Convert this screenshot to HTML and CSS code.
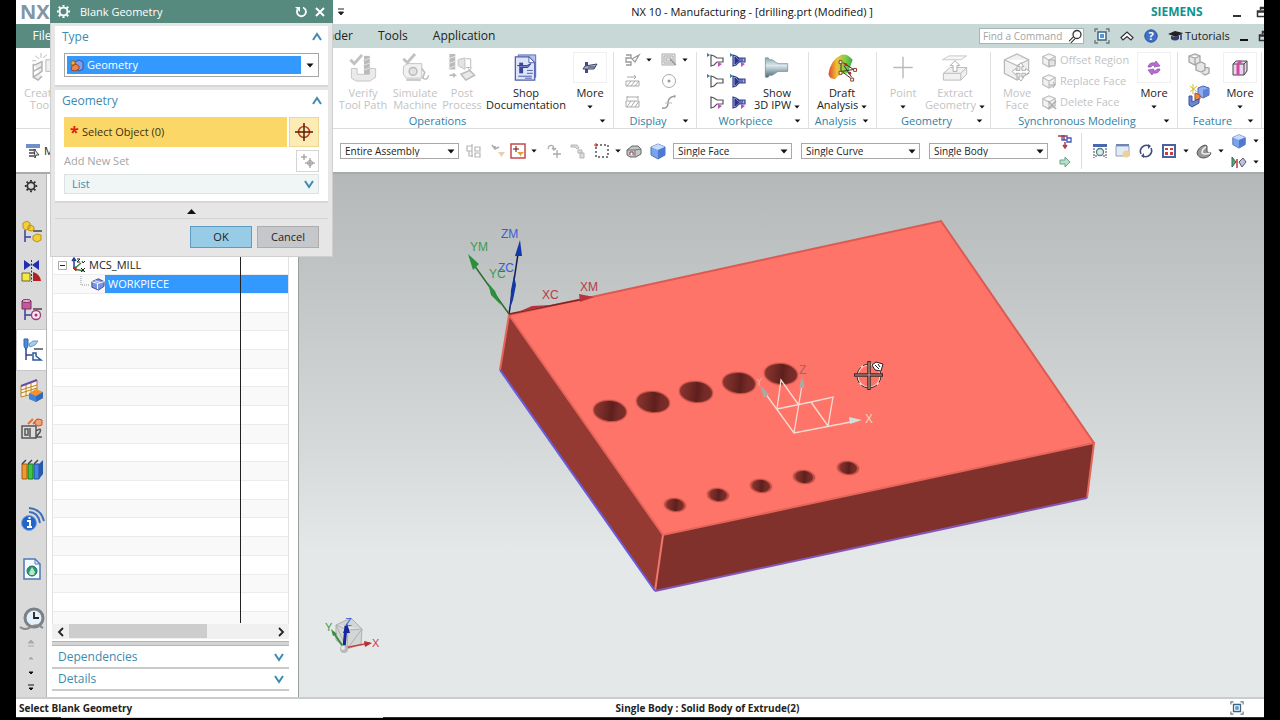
FILE: index.html
```html
<!DOCTYPE html>
<html lang="en">
<head>
<meta charset="utf-8">
<title>NX 10 - Manufacturing</title>
<link rel="stylesheet" href="styles.css">
</head>
<body>
<svg class="defs" aria-hidden="true">
  <symbol id="caret" viewBox="0 0 8 5"><path d="M0.500 0.500h7L4 4.500z" fill="#111"/></symbol>
  <symbol id="chev-up" viewBox="0 0 12 10"><path d="M2 8L6 2l4 6" fill="none" stroke="#3d8bb0" stroke-width="2"/></symbol>
  <symbol id="chev-down" viewBox="0 0 12 10"><path d="M2 2l4 6 4-6" fill="none" stroke="#3d8bb0" stroke-width="2"/></symbol>
  <symbol id="gear" viewBox="0 0 16 16"><circle cx="8" cy="8" r="4.200" fill="none" stroke="currentColor" stroke-width="2"/><path d="M8 1v2M8 13v2M1 8h2M13 8h2M3 3l1.500 1.500M11.500 11.500L13 13M13 3l-1.500 1.500M4.500 11.500L3 13" stroke="currentColor" stroke-width="2.200"/></symbol>
  <symbol id="restore" viewBox="0 0 14 12"><path d="M4.500 4V1.500h9V7H11M4 2.500h10M1.500 5h9v5.500h-9zM1 6h10" fill="none" stroke="#333" stroke-width="1.500"/></symbol>
  <symbol id="funnel" viewBox="0 0 18 16"><path d="M5 3v11l3-1 3-3h6V6h-6L8 4z" fill="#fff" stroke="#555" stroke-width="1.200"/></symbol>
  <symbol id="funnel-blue" viewBox="0 0 18 16"><path d="M4 3v11l3-1 3-3h6V6h-6L7 4z" fill="#a5adea" stroke="#38418a" stroke-width="1.200"/><path d="M6 5v7l4-3.500zM11 6v4M13 6v4M8 5l2 2" fill="#2b3484" stroke="#2b3484"/></symbol>
  <symbol id="cube" viewBox="0 0 18 18"><path d="M2 5l7-3 7 3v8l-7 4-7-4z" fill="#7aa3ee" stroke="#5270b8"/><path d="M2 5l7-3 7 3-7 3z" fill="#c6dcfb"/><path d="M9 8l7-3v8l-7 4z" fill="#4f78d2"/></symbol>
  <symbol id="cube-gray" viewBox="0 0 18 18"><path d="M2 5l7-3 7 3v8l-7 4-7-4zM2 5l7 4 7-4M9 9v8" fill="#eee" stroke="#b0b0b0" stroke-width="1.300"/></symbol>
  <symbol id="fit" viewBox="0 0 16 16"><path d="M1 4V1h3M12 1h3v3M15 12v3h-3M4 15H1v-3" fill="none" stroke="#6c7780" stroke-width="1.300"/><path d="M4 4h8v8H4z" fill="#fff" stroke="#41647f" stroke-width="1.500"/><path d="M6 6h4v4H6z" fill="#4d9ade"/></symbol>
  <symbol id="tree" viewBox="0 0 22 24"><path d="M4 10v12M4 17h6" stroke="#3b3c98" stroke-width="1.500"/><path d="M12 11h9" stroke="#222" stroke-width="1.200"/></symbol>
</svg>

<div class="app">
  <header class="titlebar">
    <div class="brand"><b>NX</b></div>
    <div class="quick"><svg width="8" height="8" viewBox="0 0 8 8"><path d="M1 1h6M1.500 4h5L4 7z" stroke="#222" fill="#222"/></svg></div>
    <h1>NX 10 - Manufacturing - [drilling.prt (Modified) ]</h1>
    <div class="wintools">
      <strong class="siemens">SIEMENS</strong>
      <button class="plain" aria-label="Minimize"><svg width="8" height="12" viewBox="0 0 8 12"><path d="M0 10h8" stroke="#333" stroke-width="2"/></svg></button>
      <button class="plain" aria-label="Restore"><svg width="14" height="12"><use href="#restore"/></svg></button>
    </div>
  </header>

  <div class="menubar">
    <button class="file">File</button>
    <nav class="tabs"><button class="tab render">Render</button><button class="tab">Tools</button><button class="tab">Application</button></nav>
    <div class="menutools">
      <label class="find"><input type="text" placeholder="Find a Command" aria-label="Find a Command"><svg width="15" height="15" viewBox="0 0 15 15"><path d="M6.500 8.500L2 13" stroke="#333" stroke-width="3.500"/><path d="M6.500 8.500L2 13" stroke="#fff" stroke-width="1.500"/><circle cx="9" cy="5.500" r="4" fill="#fff" stroke="#333" stroke-width="1.300"/></svg></label>
      <button class="plain" aria-label="Full screen"><svg width="16" height="16"><use href="#fit"/></svg></button>
      <button class="plain" aria-label="Minimize ribbon"><svg width="14" height="14" viewBox="0 0 14 14"><path d="M1 8.500L7 3l6 5.500-2 2.500-4-3.500L3 11z" fill="#fff" stroke="#333" stroke-width="1.200"/></svg></button>
      <button class="plain" aria-label="Help"><svg width="14" height="14" viewBox="0 0 14 14"><circle cx="7" cy="7" r="6.200" fill="#3f6fc6" stroke="#27509d"/><text x="7" y="11" text-anchor="middle" class="qmark">?</text></svg></button>
      <button class="tutorials"><svg width="15" height="12" viewBox="0 0 15 12"><path d="M0 4l7-3 8 2-7 4z" fill="#222"/><path d="M3 6v3q4 3 8 0V5L8 7z" fill="#343c66"/><path d="M13 4v6" stroke="#2a2f8a" stroke-width="1.500"/></svg>Tutorials</button>
      <button class="plain" aria-label="Minimize part"><svg width="8" height="12" viewBox="0 0 8 12"><path d="M0 10h8" stroke="#111" stroke-width="2"/></svg></button>
      <button class="plain" aria-label="Restore part"><svg width="14" height="12"><use href="#restore"/></svg></button>
    </div>
  </div>

  <div class="ribbon">
    <section class="group insert">
      <div class="tools"><button class="big off">
        <svg width="30" height="32" viewBox="0 0 30 32"><path d="M7 14l9-4v5l-9 5zM7 20l9-5v5l-9 6zM7 12v14l5 3 4-4" fill="#e8e8e8" stroke="#a0a0a0" stroke-width="1.500"/><path d="M9 4l4 3M15 1v5M21 3l-4 3M6 9h4" stroke="#aaa"/><path d="M20 8h8v12h-8z" fill="#eee" stroke="#aaa"/></svg>
        <span>Create<br>Tool</span></button></div>
      <footer></footer>
    </section>

    <section class="group operations">
      <div class="tools">
        <button class="big off w56"><svg width="30" height="32" viewBox="0 0 30 32"><path d="M3 17h6v6h12v-6h7v9l-6 4H8l-5-3z" fill="#e6e6e6" stroke="#b9b9b9"/><path d="M16 4h6v19h-6z" fill="#aaa"/><path d="M15 9l8-3M15 14l8-3M15 19l8-3" stroke="#ddd"/><path d="M2 8l4 4 8-9" fill="none" stroke="#b4b4b4" stroke-width="3"/></svg><span>Verify<br>Tool Path</span></button>
        <button class="big off w48"><svg width="30" height="32" viewBox="0 0 30 32"><path d="M3 15l4-3h15v15H6l-3-4z" fill="#eee" stroke="#b5b5b5"/><circle cx="13" cy="20" r="4" fill="#ddd" stroke="#aaa" stroke-width="1.500"/><path d="M22 17l3 4-2 6q5 3 6-3M6 29h15" fill="none" stroke="#aaa" stroke-width="1.500"/><path d="M3 7l4 4 8-9" fill="none" stroke="#b4b4b4" stroke-width="3"/></svg><span>Simulate<br>Machine</span></button>
        <button class="big off w46"><svg width="30" height="32" viewBox="0 0 30 32"><path d="M2 2h6v16H2z" fill="#a9a9a9"/><path d="M1 7l8-3M1 12l8-3M1 17l8-3" stroke="#e4e4e4"/><path d="M11 8l7-2v12l-7-4z" fill="#ddd" stroke="#b5b5b5"/><path d="M19 7h5v9h-5M21 16l2 3 2-3" fill="none" stroke="#aaa"/><path d="M2 24h6l-2-2M8 24l-2 2M14 23l9-4 5 5-9 5z" fill="#e4e4e4" stroke="#aaa" stroke-width="1.500"/></svg><span>Post<br>Process</span></button>
        <button class="big w82"><svg width="28" height="32" viewBox="0 0 28 32"><path d="M6 3h18v23H6z" fill="#b4c0ee" stroke="#5b6ab0"/><path d="M3 5h14l6 6v18H3z" fill="#dde4fa" stroke="#4f5fa8" stroke-width="1.300"/><path d="M17 5v6h6z" fill="#fff" stroke="#4f5fa8"/><path d="M15 19h6M15 22h6M6 25h14M13 27h7" stroke="#4b5aa5"/><path d="M7 11h4v11H7z" fill="#3c4698"/><path d="M5 14h10l4-2-3 4H8" fill="#7583c5" stroke="#38428e"/></svg><span>Shop<br>Documentation</span></button>
        <button class="big w46"><span class="morebox"><svg width="18" height="18" viewBox="0 0 18 18"><path d="M4 3h3v11H4z" fill="#3e4a90"/><path d="M2 10l2-3 12-2-3 5H6z" fill="#aeb2c8" stroke="#3f4566"/><path d="M7 8h7" stroke="#3f4566"/></svg></span><span>More<br><svg class="caret"><use href="#caret"/></svg></span></button>
      </div>
      <footer><span>Operations</span><svg class="caret"><use href="#caret"/></svg></footer>
    </section>

    <section class="group display">
      <div class="tools smallgrid">
        <button class="plain" aria-label="Show path"><svg width="16" height="14" viewBox="0 0 16 14"><path d="M1 2h5v3H1v4h5v3H1M7 6l7-4-4 7z" fill="none" stroke="#999" stroke-width="1.300"/></svg></button><svg class="caret"><use href="#caret"/></svg>
        <button class="plain" aria-label="Show boundary"><svg width="16" height="14" viewBox="0 0 16 14"><path d="M1 1h13v11H1zM3 3h9v7H3zM5 5h5v3H5z" fill="#eee" stroke="#aaa"/><path d="M9 6l6 6" stroke="#999" stroke-width="1.500"/></svg></button><svg class="caret"><use href="#caret"/></svg>
        <button class="plain" aria-label="Feed"><svg width="16" height="14" viewBox="0 0 16 14"><path d="M2 3h9L9 1M11 3L9 5M1 7h13v5H1zM2 12l4-5M6 12l4-5M10 12l4-5" fill="none" stroke="#aaa"/></svg></button><i></i>
        <button class="plain" aria-label="Circle"><svg width="16" height="16" viewBox="0 0 16 16"><circle cx="8" cy="8" r="6.500" fill="none" stroke="#aaa"/><circle cx="8" cy="8" r="1.500" fill="#999"/></svg></button><i></i>
        <button class="plain" aria-label="Width"><svg width="16" height="14" viewBox="0 0 16 14"><path d="M2 2h11M2 1v4M13 1v4M1 6h13v6H1zM2 12l4-6M6 12l4-6M10 12l4-6" fill="none" stroke="#aaa"/></svg></button><i></i>
        <button class="plain" aria-label="Curve"><svg width="16" height="16" viewBox="0 0 16 16"><path d="M1 14q6 1 6-5t7-7" fill="none" stroke="#999" stroke-width="1.500"/><path d="M4 9h7M13 1l2 1-2 2" fill="none" stroke="#bbb"/></svg></button><i></i>
      </div>
      <footer><span>Display</span><svg class="caret"><use href="#caret"/></svg></footer>
    </section>

    <section class="group workpiece">
      <div class="tools">
        <div class="funnels">
          <button class="plain" aria-label="IPW 1"><svg width="18" height="16"><use href="#funnel"/><path d="M1 1l3 2-3 2z" fill="#347d9b"/><path d="M12 10l4 2-4 3z" fill="#c050c0"/></svg></button>
          <button class="plain" aria-label="IPW 2"><svg width="18" height="16"><use href="#funnel-blue"/><path d="M1 1l3 2-3 2z" fill="#347d9b"/><path d="M12 10l4 2-4 3z" fill="#c050c0"/></svg></button>
          <button class="plain" aria-label="IPW 3"><svg width="18" height="16"><use href="#funnel"/><path d="M1 1l3 2-3 2z" fill="#347d9b"/></svg></button>
          <button class="plain" aria-label="IPW 4"><svg width="18" height="16"><use href="#funnel-blue"/><path d="M1 1l3 2-3 2z" fill="#347d9b"/></svg></button>
          <button class="plain" aria-label="IPW 5"><svg width="18" height="16"><use href="#funnel"/><path d="M12 10l4 2-4 3z" fill="#c050c0"/></svg></button>
          <button class="plain" aria-label="IPW 6"><svg width="18" height="16"><use href="#funnel-blue"/><path d="M12 10l4 2-4 3z" fill="#c050c0"/></svg></button>
        </div>
        <button class="big w52"><svg width="28" height="32" viewBox="0 0 28 32"><defs><linearGradient id="steel" x1="0" y1="0" x2="0" y2="1"><stop offset="0" stop-color="#8fa6b0"/><stop offset=".4" stop-color="#dbe8ec"/><stop offset="1" stop-color="#4f6b78"/></linearGradient></defs><path d="M2 6h3l1 2h3l6 4h10v8H15l-6 4H6l-1 2H2z" fill="url(#steel)" stroke="#6b858f" stroke-width=".7"/></svg><span>Show<br>3D IPW <svg class="caret"><use href="#caret"/></svg></span></button>
      </div>
      <footer><span>Workpiece</span><svg class="caret"><use href="#caret"/></svg></footer>
    </section>

    <section class="group analysis">
      <div class="tools"><button class="big w64"><svg width="32" height="32" viewBox="0 0 32 32"><defs><linearGradient id="heat"><stop offset="0" stop-color="#e0482a"/><stop offset=".35" stop-color="#f0c13a"/><stop offset=".7" stop-color="#7fcf45"/><stop offset="1" stop-color="#3da94a"/></linearGradient></defs><path d="M2 23Q4 8 15 3q6-2 12 5l-5 14q-9 0-13 6-6 0-7-5z" fill="url(#heat)"/><path d="M15 12v8M17 21l8 6M17 11l11 7M16 20l12-2M18 14l8 12" stroke="#333"/><path d="M13 9h3v3h-3zM13 20h3v3h-3zM25 27h3v3h-3zM28 17h3v3h-3z" fill="#fff" stroke="#8a3a20"/><circle cx="20" cy="13" r="1.500" fill="#b22"/><circle cx="24" cy="22" r="1.500" fill="#b22"/></svg><span>Draft<br>Analysis <svg class="caret"><use href="#caret"/></svg></span></button></div>
      <footer><span>Analysis</span><svg class="caret"><use href="#caret"/></svg></footer>
    </section>

    <section class="group geometry">
      <div class="tools">
        <button class="big off w48"><svg width="26" height="32" viewBox="0 0 26 32"><path d="M13 5v22M3 16h20" stroke="#aaa" stroke-width="1.500"/></svg><span>Point<br><svg class="caret"><use href="#caret"/></svg></span></button>
        <button class="big off w56"><svg width="30" height="32" viewBox="0 0 30 32"><path d="M2 8l7-4h18l-6 4z" fill="#f5f5f5" stroke="#bbb"/><path d="M3 22l7-6h17v7l-6 6H3zM3 22h18v7M21 22l6-6" fill="#eee" stroke="#aaa"/><path d="M13 20v-6h-3l5-5 5 5h-3v6z" fill="#fff" stroke="#999"/></svg><span>Extract<br>Geometry <svg class="caret"><use href="#caret"/></svg></span></button>
      </div>
      <footer><span>Geometry</span><svg class="caret"><use href="#caret"/></svg></footer>
    </section>

    <section class="group sync">
      <div class="tools">
        <button class="big off w48"><svg width="30" height="32" viewBox="0 0 30 32"><path d="M2 8l13-6 12 6v14l-12 7-13-7zM2 8l13 6 12-6M15 14v15" fill="#ededed" stroke="#aaa" stroke-width="1.300"/><path d="M19 11l3 4h-2v4h4v-2l4 3-4 4v-2h-4v4h2l-3 4-3-4h2v-4h-4v2l-4-4 4-3v2h4v-4h-2z" fill="#fff" stroke="#999"/></svg><span>Move<br>Face</span></button>
        <div class="rows">
          <button class="row off"><svg width="16" height="16"><use href="#cube-gray"/><path d="M8 8h6v6H8z" fill="#ddd" stroke="#999"/></svg>Offset Region</button>
          <button class="row off"><svg width="16" height="16"><use href="#cube-gray"/><path d="M8 12h6l-2-3M14 12l-2 3" fill="none" stroke="#999"/></svg>Replace Face</button>
          <button class="row off"><svg width="16" height="16"><use href="#cube-gray"/><path d="M7 7l8 8M15 7l-8 8" stroke="#999" stroke-width="1.500"/></svg>Delete Face</button>
        </div>
        <button class="big w46"><span class="morebox"><svg width="18" height="18" viewBox="0 0 18 18"><path d="M3 8q1-5 7-4l1-2 4 5-6 1 1-2q-4 0-4 2z" fill="#b470d0" stroke="#9452b4" stroke-width=".8"/><path d="M15 10q-1 5-7 4l-1 2-4-5 6-1-1 2q4 0 4-2z" fill="#b470d0" stroke="#9452b4" stroke-width=".8"/></svg></span><span>More<br><svg class="caret"><use href="#caret"/></svg></span></button>
      </div>
      <footer><span>Synchronous Modeling</span><svg class="caret"><use href="#caret"/></svg></footer>
    </section>

    <section class="group feature">
      <div class="tools">
        <div class="pair">
          <button class="plain" aria-label="Pattern"><svg width="24" height="26" viewBox="0 0 24 26"><path d="M2 4l6-2 5 2v6l-5 3-6-3zM2 4l6 2 5-2M8 6v7M9 12l5-2 4 2v6l-4 2-5-2zM17 15l5 1v5l-4 2-3-2" fill="#e6e6e6" stroke="#a5a5a5" stroke-width="1.300"/></svg></button>
          <button class="plain" aria-label="Wave link"><svg width="24" height="26" viewBox="0 0 24 26"><path d="M11 5l5-2 6 2v7l-6 3-5-3z" fill="#8eacf0" stroke="#4763b5"/><path d="M16 7l6-2v7l-6 3z" fill="#5f80d6"/><path d="M3 3l7 6M10 3L3 9M6 1v10" stroke="#d0b83c"/><path d="M8 10l5 2v4l-5 1z" fill="#f08a3c" stroke="#b34e1e"/><path d="M2 13h3v6l7-3v4l-7 4-3-2z" fill="#6a86cf" stroke="#3c4f9a"/></svg></button>
        </div>
        <button class="big w42"><span class="morebox"><svg width="18" height="18" viewBox="0 0 18 18"><path d="M2 5l3-3h11v10l-3 4H2z" fill="#e8d7ea" stroke="#444"/><path d="M2 5h11v11M13 5l3-3" fill="none" stroke="#444"/><path d="M7 5v11M7 5l3-3" stroke="#d545a8" stroke-width="3"/></svg></span><span>More<br><svg class="caret"><use href="#caret"/></svg></span></button>
      </div>
      <footer><span>Feature</span><svg class="caret"><use href="#caret"/></svg></footer>
    </section>
  </div>

  <div class="selbar">
    <button class="menubtn"><svg width="16" height="16" viewBox="0 0 16 16"><path d="M1 1h14v4H1z" fill="#6f8fcb"/><path d="M4 7h7M4 10h7M4 13h5" stroke="#445" stroke-width="1.500"/><path d="M9 6l5 6-3 0-1 3z" fill="#eee" stroke="#444"/></svg>Menu</button>
    <div class="combo"><select aria-label="Selection scope"><option>Entire Assembly</option></select><svg class="caret"><use href="#caret"/></svg></div>
    <div class="icons">
      <button class="plain s24" aria-label="Assembly filter"><svg width="16" height="16" viewBox="0 0 16 16"><path d="M1 3h5v5H1zM3 8v5h4M6 1v13M9 4h5v4H9zM9 10h5v4H9z" fill="none" stroke="#b5b5b5" stroke-width="1.200"/></svg></button>
      <button class="plain s24" aria-label="Reset filters"><svg width="16" height="16" viewBox="0 0 16 16"><path d="M2 2l3 4 4-2M5 6V3" fill="none" stroke="#aaa" stroke-width="1.500"/><path d="M8 9h7l-3 4v2l-1-2z" fill="#e5cfae"/></svg></button>
      <button class="plain s16" aria-label="Snap filter"><svg width="16" height="16" viewBox="0 0 16 16"><path d="M1 1h14v14H1z" fill="#fff" stroke="#c24b4b" stroke-width="1.500"/><path d="M6 3v6M3 6h6" stroke="#611"/><path d="M7 9h7l-3 3v2l-1-2z" fill="#e99b3a"/></svg></button>
      <svg class="caret slot"><use href="#caret"/></svg>
      <button class="plain s24" aria-label="Rotate"><svg width="16" height="16" viewBox="0 0 16 16"><path d="M2 6q1-5 5-3l1 3M6 5l2 2 2-2M11 7v8M7 11h8" fill="none" stroke="#aaa" stroke-width="1.300"/></svg></button>
      <button class="plain s24" aria-label="Deselect"><svg width="16" height="16" viewBox="0 0 16 16"><path d="M1 2h6l2 3-2 1-2-2H1zM8 7h4v3H8zM10 10h4v5h-4z" fill="#ddd" stroke="#b5b5b5"/></svg></button>
      <button class="plain s24" aria-label="Rectangle select"><svg width="16" height="16" viewBox="0 0 16 16"><path d="M2 2h12v12H2z" fill="none" stroke="#555" stroke-width="1.500" stroke-dasharray="2 2"/><path d="M0 2h4M2 0v4" stroke="#c33"/></svg></button>
      <svg class="caret slot8"><use href="#caret"/></svg>
      <button class="plain s24" aria-label="Highlight hidden"><svg width="16" height="16" viewBox="0 0 16 16"><path d="M1 7l5-4h6l3 3v5l-5 3H4l-3-2z" fill="#c4c4c8" stroke="#666"/><path d="M1 7h8l6-1M9 7v6" fill="none" stroke="#777"/><path d="M4 12V9h3v3" fill="#fff" stroke="#864a4a"/></svg></button>
      <button class="plain s24" aria-label="Solid"><svg width="18" height="18"><use href="#cube"/></svg></button>
    </div>
    <div class="combo"><select aria-label="Face rule"><option>Single Face</option></select><svg class="caret"><use href="#caret"/></svg></div>
    <div class="combo"><select aria-label="Curve rule"><option>Single Curve</option></select><svg class="caret"><use href="#caret"/></svg></div>
    <div class="combo"><select aria-label="Body rule"><option>Single Body</option></select><svg class="caret"><use href="#caret"/></svg></div>
    <div class="stack follow">
      <button class="plain" aria-label="Stop at intersection"><svg width="16" height="16" viewBox="0 0 16 16"><path d="M5 2h5v4H5zM10 4h4v4h-4z" fill="#fff" stroke="#4455b5" stroke-width="1.300"/><path d="M1 2h6v4M8 8v6M6 11l2 3 2-3" fill="none" stroke="#b13a45" stroke-width="1.500"/></svg></button>
      <button class="plain" aria-label="Next"><svg width="12" height="12" viewBox="0 0 12 12"><path d="M1 4h5V1l5 5-5 5V8H1z" fill="#b8dcc9" stroke="#6aa58a"/></svg></button>
    </div>
    <div class="icons views">
      <button class="plain s24" aria-label="Fit view"><svg width="16" height="16" viewBox="0 0 16 16"><path d="M1 1h14v3H1z" fill="#4a68b0"/><path d="M2 5v10M14 5v10M3 13h2M11 13h2" stroke="#445" stroke-dasharray="2 1"/><circle cx="8" cy="9" r="3.500" fill="#d9ecec" stroke="#5a8080" stroke-width="1.300"/></svg></button>
      <button class="plain s24" aria-label="Zoom"><svg width="16" height="16" viewBox="0 0 16 16"><path d="M1 3h13v10H1z" fill="#e3ebf5" stroke="#8fa0bd"/><path d="M1 2h13" stroke="#6d86b5" stroke-width="2"/><circle cx="11" cy="11" r="3.500" fill="#ecd29a"/></svg></button>
      <button class="plain s24" aria-label="Rotate view"><svg width="16" height="16" viewBox="0 0 16 16"><path d="M3 11a6 6 0 0 1 8-8M13 5a6 6 0 0 1-8 8" fill="none" stroke="#3f4f7c" stroke-width="1.600"/><path d="M10 1l3 2-3 3zM6 10l-3 3 3 2z" fill="#3f4f7c"/></svg></button>
      <button class="plain s24" aria-label="View layout"><svg width="16" height="16" viewBox="0 0 16 16"><path d="M2 2h12v12H2z" fill="#fff" stroke="#46639f" stroke-width="2"/><path d="M4 5h3v2H4zM9 5h3v2H9zM4 9h3v3H4zM9 9h3v3H9z" fill="#c94040"/></svg></button>
      <svg class="caret"><use href="#caret"/></svg>
      <button class="plain s24" aria-label="Section"><svg width="16" height="16" viewBox="0 0 16 16"><path d="M1 10q1-6 8-8l2 1v6l4 1q-1 4-7 5-6 0-7-5z" fill="#999" stroke="#555"/><path d="M6 10q0-4 4-6M6 10q2 2 8 0" fill="none" stroke="#eee" stroke-width="1.500"/></svg></button>
      <svg class="caret"><use href="#caret"/></svg>
    </div>
    <div class="stack">
      <div class="with-caret"><button class="plain" aria-label="Shaded"><svg width="16" height="16" viewBox="0 0 18 18"><use href="#cube"/></svg></button><svg class="caret"><use href="#caret"/></svg></div>
      <div class="with-caret"><button class="plain" aria-label="Clip"><svg width="16" height="14" viewBox="0 0 16 14"><path d="M1 2l4 5-4 5z" fill="#58a868" stroke="#366"/><path d="M6 4v9" stroke="#c33" stroke-width="1.500"/><path d="M8 7l4-4 3 4-4 5z" fill="#b9c5e0" stroke="#556"/></svg></button><svg class="caret"><use href="#caret"/></svg></div>
    </div>
  </div>

  <main class="work">
    <aside class="resources">
      <button class="plain gear" aria-label="Resource bar options"><svg width="14" height="14" viewBox="0 0 16 16"><use href="#gear"/></svg></button>
      <button class="res" aria-label="Assembly navigator"><svg width="22" height="24" viewBox="0 0 22 24"><use href="#tree"/><path d="M2 3l4-2 3 2v5L5 10 2 8zM7 6l3-1 3 2v3l-3 1-3-1zM12 16l4-2 4 1v5l-4 2-4-2z" fill="#f3cf3a" stroke="#bd9212"/></svg></button>
      <button class="res" aria-label="Constraint navigator"><svg width="22" height="24" viewBox="0 0 22 24"><path d="M3 1l7 5-7 5zM18 1l-7 5 7 5z" fill="#1f2fb0"/><path d="M1 14h8v8H1z" fill="#f6ea35" stroke="#665"/><path d="M12 22v-9q7 2 8 9z" fill="#b32222"/><path d="M10.500 1v22" stroke="#333" stroke-dasharray="2 1.500"/></svg></button>
      <button class="res" aria-label="Part navigator"><svg width="22" height="24" viewBox="0 0 22 24"><use href="#tree"/><path d="M1 3h9v8H1z" fill="#c05a9a" stroke="#7a2a5c"/><ellipse cx="5.500" cy="3" rx="4.500" ry="1.500" fill="#efb7d8" stroke="#7a2a5c"/><circle cx="15" cy="17" r="4.500" fill="#fbe8f2" stroke="#9b3a78" stroke-width="1.300"/><circle cx="15" cy="17" r="1.500" fill="#9b3a78"/></svg></button>
      <button class="res active" aria-label="Operation navigator"><svg width="22" height="24" viewBox="0 0 22 24"><use href="#tree"/><path d="M2 1h4v7l-2 4-2-4z" fill="#4c8cd4" stroke="#2c65a8"/><path d="M7 6l4-3h5l-3 4-5 2z" fill="#a9cdf0" stroke="#6599cb"/><path d="M11 15h3v3l5 4h-8z" fill="#fff" stroke="#2c5a98" stroke-width="1.500"/></svg></button>
      <button class="res" aria-label="Machine tool navigator"><svg width="24" height="24" viewBox="0 0 24 24"><path d="M1 7l16-6v13L1 18zM1 11l16-5M1 14l16-5M6 5v12M11 3v12" fill="#fff6dd" stroke="#b8822a"/><path d="M1 7l16-6" stroke="#6a4bb0" stroke-width="2"/><path d="M9 14l7-4 7 3v6l-7 4-7-3z" fill="#f2922c"/><path d="M16 17l7-4v6l-7 4z" fill="#2c6ac4"/><path d="M9 14l7 3v6l-7-3z" fill="#3f85dd"/></svg></button>
      <button class="res" aria-label="Machining wizard"><svg width="24" height="24" viewBox="0 0 24 24"><path d="M2 8h14v12H2zM5 11h3v6H5zM10 10v9M16 13q6-4 4 1l-4 5h6" fill="#ddd" stroke="#555" stroke-width="1.500"/><path d="M8 6l5-5M13 6l5-5" stroke="#e2703a" stroke-width="2"/><path d="M15 3l3-2 4 1v5l-4 1-3-2z" fill="#f3a475" stroke="#c95120"/></svg></button>
      <button class="res" aria-label="Reuse library"><svg width="24" height="24" viewBox="0 0 24 24"><path d="M2 7l5-5h16v13l-5 6H2z" fill="#ddd"/><path d="M2 7h5v15H2z" fill="#f09a2e" stroke="#a85c12"/><path d="M8 7h5v15H8z" fill="#3fc443" stroke="#1d7c22"/><path d="M14 7h5v15h-5z" fill="#4386e4" stroke="#2350a0"/><path d="M19 7l4-4v14l-4 5z" fill="#2759ad"/><path d="M2 7l4-4M8 7l4-4M14 7l4-4" stroke="#445" stroke-width="1.500"/></svg></button>
      <button class="res gap" aria-label="HD3D tools"><svg width="24" height="24" viewBox="0 0 24 24"><circle cx="9" cy="16" r="7.500" fill="#2464c8" stroke="#7fa6df"/><path d="M7 14h3v6M7 20h5M8.500 11h2" fill="none" stroke="#fff" stroke-width="2"/><path d="M9 5q9 0 11 11M9 1q12 1 15 13" fill="none" stroke="#3f6fb8" stroke-width="2"/></svg></button>
      <button class="res gap" aria-label="Web browser"><svg width="20" height="24" viewBox="0 0 20 24"><path d="M2 2h11l5 5v15H2z" fill="#f5faff" stroke="#4b78b8" stroke-width="1.500"/><path d="M13 2v5h5" fill="none" stroke="#4b78b8"/><circle cx="10" cy="14" r="5" fill="#2d9a66" stroke="#1d6a80"/><path d="M10 10l3 5-1 3H8l-1-2z" fill="#b9e6c4"/></svg></button>
      <button class="res gap" aria-label="History"><svg width="26" height="24" viewBox="0 0 26 24"><circle cx="15" cy="11" r="9" fill="#e4f1fb" stroke="#7a8288" stroke-width="3"/><path d="M15 5v6h5" fill="none" stroke="#222" stroke-width="1.800"/><path d="M1 20q5 4 11 0t12 1" fill="none" stroke="#888" stroke-width="2"/></svg></button>
      <div class="pager">
        <svg width="8" height="8" viewBox="0 0 8 8"><path d="M1 4h6L4 1zM1 7h6" fill="#aaa" stroke="#aaa"/></svg>
        <svg width="8" height="8" viewBox="0 0 8 8"><path d="M2 5h4L4 3z" fill="#aaa" stroke="#aaa"/></svg>
        <svg width="8" height="8" viewBox="0 0 8 8"><path d="M2 3h4L4 5z" fill="#111" stroke="#111"/></svg>
        <svg width="8" height="8" viewBox="0 0 8 8"><path d="M1 1h6M2 4h4L4 6z" fill="#111" stroke="#111"/></svg>
      </div>
    </aside>

    <section class="navigator">
      <div class="navhead"></div>
      <ul class="tree" role="tree">
        <li></li>
        <li></li>
        <li role="treeitem" class="mcs"><svg class="twisty" width="9" height="16" viewBox="0 0 9 16"><path d="M.500 4.500h8v8h-8z" fill="#fff" stroke="#aaa"/><path d="M2 8.500h5" stroke="#222"/></svg><svg width="16" height="16" viewBox="0 0 16 16"><path d="M4 12V2M2 4l2-3 2 3" fill="none" stroke="#223a9c" stroke-width="1.500"/><path d="M4 12l10 2M4 12l7-6" stroke="#2c8a3a" stroke-width="1.500"/><path d="M3 11l3-1v4z" fill="#c22" stroke="#c22"/><path d="M7 2h3L7 5h3M12 4l1 2 2-2M11 11l4 4M15 11l-4 4" fill="none" stroke="#222"/></svg><span>MCS_MILL</span></li>
        <li role="treeitem" class="wp" aria-selected="true"><svg class="branch" width="10" height="16" viewBox="0 0 10 16"><path d="M1 0v9h9" fill="none" stroke="#999" stroke-dasharray="1 1"/></svg><svg width="15" height="15" viewBox="0 0 16 16"><path d="M2 6l7-3 6 3v5l-6 4-7-3z" fill="#7d92e0" stroke="#36468f"/><path d="M2 6l6 2v6M8 8l7-2M5 5l6 2" fill="none" stroke="#fff"/></svg><span>WORKPIECE</span></li>
        <li></li><li></li><li></li><li></li><li></li><li></li><li></li><li></li><li></li><li></li><li></li><li></li><li></li><li></li><li></li><li></li><li></li><li></li>
      </ul>
      <div class="hscroll"><button class="plain" aria-label="Scroll left"><svg width="8" height="10" viewBox="0 0 8 10"><path d="M6 1L2 5l4 4" fill="none" stroke="#222" stroke-width="1.800"/></svg></button><div class="track"><div class="thumb"></div></div><button class="plain" aria-label="Scroll right"><svg width="8" height="10" viewBox="0 0 8 10"><path d="M2 1l4 4-4 4" fill="none" stroke="#222" stroke-width="1.800"/></svg></button></div>
      <div class="splitter"></div>
      <button class="fold">Dependencies<svg width="12" height="10"><use href="#chev-down"/></svg></button>
      <button class="fold">Details<svg width="12" height="10"><use href="#chev-down"/></svg></button>
    </section>

    <section class="viewport">
      <svg viewBox="299 174 965 523" preserveAspectRatio="xMidYMid slice" role="img" aria-label="Drilled block model">
        <defs>
          <linearGradient id="bore"><stop offset="0" stop-color="#8a352f"/><stop offset=".3" stop-color="#742a26"/><stop offset=".55" stop-color="#5e1f1c"/><stop offset=".75" stop-color="#742a26"/><stop offset="1" stop-color="#7d2e29"/></linearGradient>
          <g id="hole-l"><ellipse rx="18" ry="12" transform="rotate(6)" fill="#f06c61"/><ellipse rx="17" ry="11" transform="rotate(6)" fill="#c04f46"/><ellipse rx="16" ry="10" transform="rotate(6)" fill="url(#bore)"/></g>
          <g id="hole-s"><ellipse rx="12" ry="8" transform="rotate(6)" fill="#f06c61"/><ellipse rx="11" ry="7" transform="rotate(6)" fill="#c04f46"/><ellipse rx="9" ry="6" transform="rotate(6)" fill="url(#bore)"/></g>
        </defs>
        <path d="M509 315L941 221l153 222-431 92z" fill="#ff7468"/>
        <path d="M509 315L663 535l-8 56L500 370z" fill="#943a33"/>
        <path d="M663 535l431-92-7 55-432 93z" fill="#80312c"/>
        <path d="M500 370L509 315 663 535l431-92-7 55" fill="none" stroke="#e5655b" stroke-width="2"/>
        <path d="M509 315L941 221l153 222" fill="none" stroke="#db5a52" stroke-width="2"/>
        <path d="M663 535l-8 56" stroke="#f0766c" stroke-width="2"/>
        <path d="M500 370l155 221" stroke="#6a5ce0" stroke-width="2"/>
        <path d="M655 591l432-93" stroke="#8455b8" stroke-width="2"/>
        <use href="#hole-l" x="610" y="411"/><use href="#hole-l" x="653" y="402"/><use href="#hole-l" x="696" y="392"/><use href="#hole-l" x="739" y="383"/><use href="#hole-l" x="781" y="374"/>
        <use href="#hole-s" x="675" y="505"/><use href="#hole-s" x="718" y="495"/><use href="#hole-s" x="761" y="486"/><use href="#hole-s" x="804" y="477"/><use href="#hole-s" x="848" y="468"/>

        <path d="M509 314l10-67" stroke="#111a50" stroke-width="1.500"/>
        <path d="M509 314L474 265" stroke="#2d6c35" stroke-width="1.500"/>
        <path d="M509 314l80-16" stroke="#7d2424" stroke-width="1.500"/>
        <path d="M520 240l2 16h-7zM514 275l2 10-3 15-3 8 1-18z" fill="#1238a4"/>
        <path d="M468 254l11 10-6 6zM488 283l7 8 6 14-10-10z" fill="#2b8f3c"/>
        <path d="M594 297l-15-3 1 8zM550 305l-16 4-16 3 14-6z" fill="#b9343a"/>
        <g class="axis"><text x="501" y="238" fill="#3c5bdc">ZM</text><text x="498" y="272" fill="#3c5bdc">ZC</text><text x="470" y="251" fill="#3f9a50">YM</text><text x="489" y="278" fill="#3f9a50">YC</text><text x="542" y="299" fill="#b83a45">XC</text><text x="580" y="291" fill="#b83a45">XM</text></g>

        <g fill="none" stroke="#f3dcd3" stroke-width="1.300"><path d="M765 393l29 40 62-12M794 433l8-48M777 409l34-7 22-5-5 29-17-24M777 409l4-29 17 24"/></g>
        <path d="M760 385l9 9-5 4zM802 376l3 12h-6z" fill="#a9aaa6"/><path d="M862 420l-13-3 1 7z" fill="#cfe0db"/>
        <g class="axis"><text x="865" y="423" fill="#e5d5cf">X</text><text x="799" y="374" fill="#a06860">Z</text></g>
        <path d="M757 379l3 3M762 378l-3 4v4" stroke="#f5b0a5" fill="none"/>

        <g fill="none"><circle cx="869" cy="376" r="11.500" stroke="#ffd0c6" stroke-width="2"/><circle cx="869" cy="376" r="12" stroke="#3b1a18" stroke-dasharray="7 3"/><path d="M869 361v29M854 375h29" stroke="#3b2a28" stroke-width="3.500"/><path d="M869 362v27M855 375h27" stroke="#c09a94" stroke-width="1.200"/><path d="M872 365l4-3 7 2-2 7-6-1z" fill="#fff" stroke="#222"/><path d="M875 365l4 4M878 364l2 3" stroke="#222"/></g>

        <path d="M336 625l15-7 11 11-1 15-14 5-11-9zM336 625l12 5 14-1M348 630l-1 19M336 625l11 24M362 629l-15 20" fill="#d4d6d6" stroke="#adb0b0"/>
        <path d="M344 648l2-22" stroke="#15279a" stroke-width="3"/><path d="M343 633l4-10 3 10z" fill="#15279a"/>
        <path d="M344 648l-11-16" stroke="#3a8d44" stroke-width="2"/><path d="M331 629l6 5-4 2z" fill="#3a8d44"/>
        <path d="M344 648l26-5" stroke="#c04040" stroke-width="1.500"/><path d="M372 643l-8-2 1 6z" fill="#b92d35"/>
        <circle cx="344" cy="649" r="4" fill="#b7b9b9"/><circle cx="343" cy="648" r="2" fill="#e8e8e8"/>
        <g class="axis small"><text x="345" y="626" fill="#3c5bdc">Z</text><text x="325" y="631" fill="#3f9a50">Y</text><text x="372" y="647" fill="#c8404a">X</text></g>
      </svg>
    </section>
  </main>

  <footer class="status"><span>Select Blank Geometry</span><span class="cue">Single Body : Solid Body of Extrude(2)</span><svg width="14" height="14" viewBox="0 0 16 16"><use href="#fit"/></svg></footer>
  <div class="taskbar"></div>
</div>

<div class="dialog" role="dialog" aria-label="Blank Geometry">
  <header><svg width="15" height="15" viewBox="0 0 16 16"><use href="#gear"/></svg><h2>Blank Geometry</h2>
    <button class="plain" aria-label="Reset"><svg width="13" height="13" viewBox="0 0 13 13"><path d="M2.500 4.500A4.500 4.500 0 1 0 8 2.500" fill="none" stroke="#fff" stroke-width="1.800"/><path d="M0 2h5v5z" fill="#fff"/></svg></button>
    <button class="plain" aria-label="Close"><svg width="12" height="12" viewBox="0 0 12 12"><path d="M2 2l8 8M10 2l-8 8" stroke="#fff" stroke-width="2"/></svg></button>
  </header>
  <section class="card">
    <h3>Type<svg width="12" height="10"><use href="#chev-up"/></svg></h3>
    <div class="typebox"><svg class="typeicon" width="14" height="14" viewBox="0 0 14 14"><path d="M5 4l4-2 4 2v7l-4 2-4-2z" fill="#7f9fe8" stroke="#3d4f9c"/><path d="M1 3h4v4H1z" fill="#e9b44c" stroke="#9c5d1e"/><path d="M2 8l4-2 3 2v3l-4 2-4-1z" fill="#e8854a" stroke="#a8411c"/></svg><select aria-label="Type"><option>Geometry</option></select><svg class="caret"><use href="#caret"/></svg></div>
  </section>
  <section class="card geom">
    <h3>Geometry<svg width="12" height="10"><use href="#chev-up"/></svg></h3>
    <div class="pick"><button class="select"><b>*</b>Select Object (0)</button><button class="target" aria-label="Select object"><svg width="18" height="18" viewBox="0 0 18 18"><circle cx="9" cy="9" r="5.500" fill="none" stroke="#c93a22" stroke-width="1.500"/><path d="M9 0v18M0 9h18" stroke="#4a2010" stroke-width="1.500"/></svg></button></div>
    <div class="addset"><span>Add New Set</span><button aria-label="Add new set"><svg width="14" height="14" viewBox="0 0 14 14"><path d="M3 0v6M0 3h6M9 4v10M4 9h10" stroke="#888"/><circle cx="9" cy="9" r="2.500" fill="none" stroke="#999"/></svg></button></div>
    <button class="list">List<svg width="12" height="10"><use href="#chev-down"/></svg></button>
  </section>
  <div class="collapse"><svg width="9" height="5" viewBox="0 0 9 5"><path d="M0 5h9L4.500 0z" fill="#111"/></svg></div>
  <div class="actions"><button class="ok">OK</button><button class="cancel">Cancel</button></div>
</div>
</body>
</html>
```
FILE: styles.css
```css
* { box-sizing: border-box; }
body {
  margin: 0;
  padding: 0 16px;
  background: #000;
  color: #222;
  font: 11px/12px "Open Sans", "Noto Sans", sans-serif;
  position: relative;
}
h1, h2, h3, ul { margin: 0; padding: 0; font-weight: 400; }
button, input, select { font: inherit; color: inherit; margin: 0; padding: 0; border: 0; background: none; border-radius: 0; }
svg { flex: none; display: block; overflow: visible; }
.defs { position: absolute; width: 0; height: 0; }
.plain { display: flex; align-items: center; justify-content: center; }
.caret { width: 6px; height: 4px; display: inline-block; }

.app { min-height: 100vh; display: flex; flex-direction: column; background: #fff; overflow: hidden; }

.titlebar { height: 24px; display: grid; grid-template-columns: 321px 10px 1fr auto; align-items: center; }
.brand { padding-left: 4px; font-size: 20px; line-height: 24px; color: #8296a3; }
h1 { font-size: 11px; text-align: center; color: #111; padding-left: 6px; }
.wintools { display: flex; align-items: center; gap: 15px; width: 113px; }
.siemens { color: #0b938d; font-size: 12px; margin-right: 15px; }

.menubar { height: 24px; display: flex; background: #c8d8d7; font-size: 12px; }
.file { width: 38px; padding-left: 14px; background: #5a8b80; color: #fff; text-align: center; }
.tabs { display: flex; flex: 1; gap: 25px; padding-left: 261px; }
.render { width: 38px; display: flex; justify-content: flex-end; align-items: center; }
.menutools { display: flex; align-items: center; gap: 10px; width: 285px; overflow: hidden; }
.menutools > * { flex: none; }
.find { display: flex; align-items: center; width: 105px; height: 16px; background: #fff; border: 1px solid #a9b5b4; }
.find input { width: 88px; padding-left: 3px; font-size: 10px; outline: 0; }
.find input::placeholder { color: #a3a3a3; opacity: 1; }
.qmark { font: bold 11px "Open Sans", sans-serif; fill: #fff; }
.tutorials { display: flex; align-items: center; gap: 2px; font-size: 11px; }

.ribbon { height: 81px; display: flex; border-bottom: 1px solid #dcdcdc; overflow: hidden; }
.group { flex: none; display: flex; flex-direction: column; border-right: 1px solid #e0e0e0; margin: 4px 0 0; }
.insert { width: 260px; border: 0; }
.operations { width: 338px; }
.display { width: 83px; }
.workpiece { width: 112px; }
.analysis { width: 68px; }
.geometry { width: 114px; }
.sync { width: 187px; }
.feature { width: 84px; }
.tools { display: flex; flex: 1; }
.operations .tools { justify-content: flex-end; }
.insert .tools { padding-left: 8px; }
.group footer { display: flex; align-items: center; height: 14px; color: #2f80a5; }
.group footer span { flex: 1; text-align: center; }
.group footer .caret { width: 14px; padding-right: 7px; height: 4px; }
.big { display: flex; flex-direction: column; align-items: center; gap: 4px; color: #222; white-space: nowrap; }
.big > svg { height: 31px; }
.big > span:last-child { text-align: center; }
.off { color: #c3c3c3; }
.off > svg { opacity: .8; }
.w42 { width: 42px; } .w46 { width: 46px; } .w48 { width: 48px; } .w52 { width: 52px; } .w56 { width: 56px; } .w64 { width: 66px; } .w82 { width: 82px; }
.morebox { display: flex; align-items: center; justify-content: center; width: 34px; height: 31px; border: 1px solid #f0f0f0; }
.smallgrid { display: grid; grid-template-columns: 18px 10px 18px 10px; grid-template-rows: repeat(3, 16px); column-gap: 5px; row-gap: 5px; align-items: center; padding-left: 10px; }
.smallgrid { column-gap: 4px; }
.funnels { display: grid; grid-template-columns: 18px 18px; gap: 5px; grid-template-rows: repeat(3, 16px); padding: 0 4px 0 9px; }
.geometry .tools, .sync .tools { padding-left: 2px; }
.rows { display: flex; flex-direction: column; gap: 5px; width: 90px; flex: none; }
.row { display: flex; align-items: center; gap: 3px; height: 16px; white-space: nowrap; }
.pair { width: 41px; display: flex; flex-direction: column; gap: 5px; align-items: center; }

.selbar { height: 45px; display: flex; align-items: center; border-bottom: 2px solid #a8abab; overflow: hidden; }
.selbar > * { flex: none; }
.menubtn { display: flex; align-items: center; gap: 3px; width: 324px; padding-left: 9px; }
.combo { position: relative; width: 119px; margin-right: 9px; }
.combo select { width: 100%; height: 16px; padding-left: 4px; border: 1px solid #a8a8a8; background: #fff; appearance: none; font-size: 10px; line-height: 12px; }
.combo .caret { position: absolute; right: 4px; top: 6px; width: 8px; height: 5px; }
.icons { display: flex; align-items: center; }
.combo + .icons { margin-left: -6px; margin-right: 3px; }
.s24 { width: 24px; } .s16 { width: 16px; }
.slot { width: 16px; padding-left: 5px; padding-right: 5px; }
.slot8 { width: 8px; }
.stack { display: flex; flex-direction: column; gap: 6px; align-items: center; }
.follow { width: 16px; height: 40px; margin-right: 8px; justify-content: center; }
.views { border-left: 1px solid #dcdcdc; height: 36px; padding-left: 6px; margin-right: 4px; }
.views .s24 { width: 23px; }
.views .caret { margin: 0 3px; }
.with-caret { display: flex; align-items: center; gap: 6px; }

.work { flex: 1; display: flex; }
.resources { width: 31px; background: #dadada; border-right: 1px solid #b5b5b5; display: flex; flex-direction: column; align-items: center; }
.gear { height: 24px; color: #333; margin-bottom: 14px; }
.res { width: 28px; height: 39px; flex: none; display: flex; align-items: center; justify-content: center; padding-left: 2px; }
.res.active { width: 100%; background: #fff; height: 42px; border: 1px solid #c8c8c8; border-right: 0; }
.res.gap { margin-top: 11px; }
.pager { display: flex; flex-direction: column; gap: 7px; align-items: center; margin-top: 1px; }

.navigator { width: 252px; flex: none; padding: 0 9px 0 5px; border-right: 1px solid #9b9f9f; display: flex; flex-direction: column; }
.navhead { height: 45px; }
.tree { flex: 1; position: relative; margin: 0; list-style: none; display: grid; grid-template-rows: repeat(21, minmax(0, 1fr)) 12px; border: 1px solid #e2e2e2; border-width: 0 1px; color: #222; }
.tree::after { content: ""; position: absolute; left: 187px; top: 0; bottom: 1px; width: 1px; background: #222; }
.tree li { display: flex; align-items: center; border-bottom: 1px solid #ececec; min-height: 0; }
.tree li:nth-child(even) { background: #f9f9f9; }
.tree li:last-child { border: 0; }
.mcs { gap: 3px; padding-left: 5px; }
.wp { gap: 0; padding-left: 27px; }
.wp span { flex: 1; align-self: stretch; display: flex; align-items: center; background: #3399ff; color: #fff; padding-left: 3px; }
.hscroll { height: 15px; display: flex; background: #f0f0f0; }
.hscroll .plain { width: 17px; }
.track { flex: 1; }
.thumb { width: 68%; height: 14px; background: #cdcdcd; }
.splitter { height: 5px; margin: 2px 0 1px; background: #d4d4d4; border: 1px solid #b5b5b5; border-width: 1px 0; }
.fold { height: 22px; padding: 0 4px 0 6px; display: flex; align-items: center; justify-content: space-between; border-bottom: 2px solid #cacaca; color: #3d8bb0; font-size: 12px; }
.fold:last-child { margin-bottom: 6px; }

.viewport { flex: 1; position: relative; background: linear-gradient(#b4b8b8, #d6d9d9 52%, #e4e8e8 72%, #e4e8e8); }
.viewport svg { position: absolute; inset: 0; width: 100%; height: 100%; overflow: hidden; }
.axis { font: 12px "Liberation Sans", sans-serif; }
.small { font-size: 11px; }

.status { height: 20px; border-top: 2px solid #cacdcd; display: grid; grid-template-columns: 1fr auto 1fr; align-items: center; padding: 0 20px 0 3px; font-size: 10px; font-weight: 700; }
.status svg { justify-self: end; }
.cue { padding-left: 152px; }
.taskbar { height: 3px; background: linear-gradient(90deg, #333 45px, #ddd 45px, #ddd 367px, #333 367px); border-bottom: 2px solid #000; }

.dialog { position: absolute; left: 50px; top: 0; width: 283px; background: #e6e6e6; border: 1px solid #cfcfcf; border-top: 0; padding-bottom: 8px; }
.dialog header { height: 23px; display: flex; align-items: center; padding: 0 7px 0 6px; margin: 0 -1px 3px; background: #578a7f; color: #fff; }
.dialog h2 { flex: 1; padding-left: 9px; font-size: 11px; }
.dialog header .plain + .plain { margin-left: 6px; }
.card { margin: 0 4px 3px; padding: 4px 9px 8px; background: #fff; border-bottom: 2px solid #d6d6d6; }
h3 { display: flex; justify-content: space-between; align-items: center; height: 14px; margin: 0 -4px 9px -2px; color: #3d8bb0; font-size: 12px; }
.typebox { position: relative; height: 24px; padding: 2px; border: 1px solid #a5a5a5; }
.typebox select { width: 234px; height: 18px; padding-left: 20px; appearance: none; background: #3399ff; color: #fff; font-size: 11px; line-height: 18px; }
.typeicon { position: absolute; left: 5px; top: 4px; }
.typebox .caret { position: absolute; right: 4px; top: 9px; width: 8px; height: 5px; }
.geom { padding-bottom: 7px; margin-bottom: 0; }
.pick { display: flex; gap: 2px; height: 30px; }
.select { flex: 1; background: #fbd768; display: flex; align-items: center; padding-left: 6px; color: #3c3110; }
.select b { width: 12px; color: #e02010; font-size: 16px; text-align: left; }
.target { width: 30px; display: flex; align-items: center; justify-content: center; background: #fcebb3; border: 1px solid #ecd894; }
.addset { display: flex; justify-content: space-between; align-items: center; color: #a5a5a5; height: 27px; }
.addset button { width: 23px; height: 22px; border: 1px solid #d5d5d5; display: flex; align-items: center; justify-content: center; }
.list { width: 100%; height: 20px; display: flex; justify-content: space-between; align-items: center; padding: 0 3px 0 7px; background: #f0f5f6; border: 1px solid #dde2e3; color: #3d8bb0; }
.collapse { height: 16px; margin: 0 4px; padding-top: 2px; display: flex; align-items: center; justify-content: center; border-bottom: 1px solid #d4d4d4; }
.actions { display: flex; justify-content: flex-end; gap: 5px; padding: 7px 13px 0 0; }
.actions button { width: 62px; height: 22px; border: 1px solid #adadad; background: #c6c7ca; }
.actions .ok { background: #98cbe6; border-color: #5d9cc0; }
```
